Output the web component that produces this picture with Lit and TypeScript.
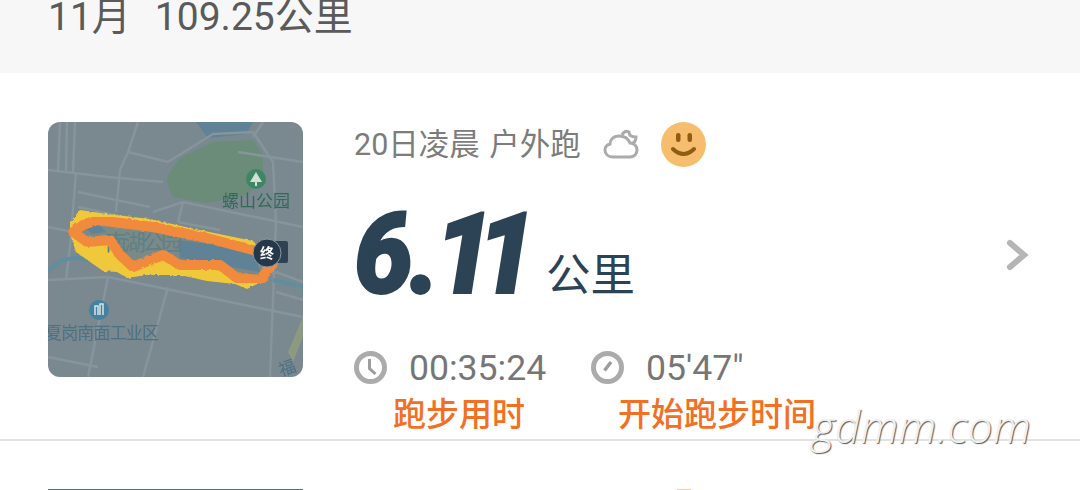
import { LitElement, html, css, svg } from "lit";
import { customElement } from "lit/decorators.js";

const roads = [
  "M0 48 L60 55 L115 60", "M12 0 L10 50", "M19 0 L18 50", "M27 0 L25 50", "M90 0 L80 30 L72 48 L68 90",
  "M80 30 L120 40 L165 12 L205 10 L225 40 L228 100 L222 255", "M30 70 L102 85", "M30 85 L100 100",
  "M105 90 L135 80 L255 105", "M135 80 L130 100", "M130 100 L172 108", "M190 30 L255 40", "M215 0 L205 15",
  "M0 158 L60 155 L255 195", "M60 155 L40 255", "M120 165 L95 255", "M228 150 L255 160", "M0 235 L50 245",
  "M28 50 L22 125 L18 158", "M0 105 L25 110", "M228 170 L255 178"
];
const route = "M205 128 L159 116 L105 105 L49 98 L35 103 L25 110 L39 120 L62 118 L72 133 L85 145 L115 133 L132 143 L149 143 L172 143 L189 156 L212 158 L225 141";

@customElement("run-map")
class RunMap extends LitElement {
  static styles = css`
    :host { display: block; width: 255px; height: 255px; flex: none; border-radius: 12px; overflow: hidden; }
    svg { display: block; }
    text { font-family: "Noto Sans CJK SC", sans-serif; }
    .soft { filter: blur(0.6px); }
    .green { fill: #336a55; font-size: 17px; }
    .blue { fill: #4d7184; font-size: 17px; }
    .lakeName { fill: #5f8084; font-size: 22px; }
    .end { fill: #fff; font-size: 14px; font-weight: 700; }
  `;
  render() {
    return html`<svg width="255" height="255" viewBox="0 0 255 255">
      <defs>
        <filter id="rough" x="-5%" y="-5%" width="110%" height="110%">
          <feTurbulence type="fractalNoise" baseFrequency="0.25" numOctaves="2" seed="3" />
          <feDisplacementMap in="SourceGraphic" scale="3" />
        </filter>
      </defs>
      <g class="soft">
        <rect width="255" height="255" fill="#7a8890" />
        <path d="M148 0 L205 0 L198 12 L160 16 Z" fill="#5f8296" />
        <path d="M120 53 L132 36 L165 20 L205 18 L215 33 L215 56 L199 73 L159 81 L125 75 L119 60 Z" fill="#6b8c78" />
        ${roads.map((d) => svg`<path d=${d} fill="none" stroke="#86949c" stroke-width="2.5" />`)}
        <path d="M0 150 Q10 136 30 136 L60 140" fill="none" stroke="#5f8e9f" stroke-width="4" />
        <path d="M225 158 L255 165" fill="none" stroke="#5f8e9f" stroke-width="4" />
        <path d="M240 230 L255 195 L255 215 L245 240 Z" fill="#8b9a80" />
        <path filter="url(#rough)" d="M22 100 L32 88 L59 92 L102 97 L142 106 L205 119 L226 143 L219 157 L199 167 L187 162 L159 159 L132 153 L99 153 L79 156 L69 150 L55 149 L28 130 L22 112 Z" fill="#f0c93a" />
        <path d="${route} Z" fill="#7a8a88" />
        <path d="M36 105 L49 100 L58 110 L44 112 Z" fill="#5f8296" />
        <path d="M130 118 L205 128 L212 150 L172 143 L132 136 Z" fill="#5f8296" />
        <text x="57" y="128" class="lakeName" textLength="78">南湖公园</text>
        <path filter="url(#rough)" d=${route} fill="none" stroke="#f28a3e" stroke-width="10" stroke-linejoin="round" stroke-linecap="round" />
        <circle cx="208" cy="57" r="10" fill="#3f8566" />
        <path d="M208 50 L214 60 H202 Z M207 60 H209 V64 H207 Z" fill="#cfe0d4" />
        <text x="174" y="85" class="green" textLength="68">螺山公园</text>
        <circle cx="51" cy="188" r="10" fill="#44829f" />
        <path d="M47 193 V184 H50 V193 M52 193 V182 H55 V193" fill="none" stroke="#d5e3ea" stroke-width="1.5" />
        <text x="-3" y="217" class="blue" textLength="114">夏岗南面工业区</text>
        <text x="232" y="252" class="blue" transform="rotate(-20 240 250)">福</text>
        <rect x="218" y="119" width="22" height="22" rx="2" fill="#2f4152" />
      </g>
      <circle cx="219" cy="131" r="14" fill="#24384a" stroke="#8a98a3" stroke-width="1" />
      <text x="219" y="136" class="end" text-anchor="middle">终</text>
    </svg>`;
  }
}

@customElement("app-root")
class AppRoot extends LitElement {
  static styles = css`
    :host { display: block; width: 1080px; height: 490px; overflow: hidden; position: relative; background: #fff;
      font-family: Roboto, "Noto Sans CJK SC", sans-serif; }
    .head { height: 73px; background: #f7f7f7; color: #5a5a5a; font-size: 39px; line-height: 30px;
      display: flex; gap: 24px; padding: 0 0 0 48px; box-sizing: border-box; overflow: hidden; white-space: nowrap; }
    .head span { display: block; margin-top: 2px; }
    .row { display: flex; padding: 49px 50px 62px 48px; gap: 51px; border-bottom: 2px solid #e2e2e2; height: 368px; box-sizing: border-box; }
    .info { flex: 1; display: flex; flex-direction: column; }
    .title { display: flex; align-items: center; height: 45px; color: #7c7c7c; font-size: 30.5px; white-space: nowrap; }
    .title span { margin-bottom: 6px; word-spacing: 2px; }
    .cloud { margin-left: 22px; }
    .smile { margin-left: 22px; }
    .dist { display: flex; align-items: flex-start; margin-top: 26px; height: 130px; color: #2c4255; }
    .num { display: inline-block; width: 192px; font-style: italic; font-weight: 900; font-size: 113px; line-height: 130px;
      white-space: nowrap; transform: scaleX(0.93); transform-origin: left; margin-top: -3px;
      -webkit-text-stroke: 2px #2c4255; }
    .six { letter-spacing: -4px; }
    .dot { letter-spacing: -6px; }
    .one { letter-spacing: -18px; }
    .unit { font-size: 44.5px; line-height: 44px; margin-top: 61px; }
    .stats { display: flex; align-items: center; height: 34px; margin-top: 30px; color: #767676; font-size: 35.6px; }
    .stat { display: flex; align-items: center; gap: 22px; width: 237px; }
    .stat span { margin-top: 2px; }
    .chev { align-self: center; flex: none; margin-top: 10px; margin-left: 3px; }
    .sliver { display: flex; padding: 48px 0 0 48px; position: relative; }
    .sliver i { display: block; width: 255px; height: 2px; background: #5d6f75; }
    .sliver b { display: block; margin-left: 374px; width: 14px; height: 2px; background: #f4d36f; }
    .note { position: absolute; top: 391px; color: #f36f23; font-size: 33px; font-weight: 500; line-height: 42px; white-space: nowrap; font-family: "Noto Sans CJK SC", sans-serif; }
    .a { left: 393px; }
    .b { left: 618px; }
    .mark { position: absolute; left: 812px; top: 396px; font-family: "Open Sans", sans-serif; font-style: italic; font-weight: 300; font-size: 44px; line-height: 60px;
      letter-spacing: 0.5px; color: #f1f1f1; text-shadow: 1px 1px 1px #555; white-space: nowrap; }
  `;
  render() {
    return html`
      <div class="head"><span>11月</span><span>109.25公里</span></div>
      <div class="row">
        <run-map></run-map>
        <div class="info">
          <div class="title">
            <span>20日凌晨 户外跑</span>
            <svg class="cloud" width="36" height="32" viewBox="0 0 36 32" fill="none">
              <path d="M10 28 H27 C32 28 34 24 34 21 C34 17 31 14 27 14 C25 9 21 7 16 7 C10 7 7 11 7 15 C3 16 2 19 2 21 C2 25 5 28 10 28 Z" stroke="#ababab" stroke-width="3" />
              <path d="M19 6 C21 2 24 2 26 3 C26 6 28 8 33 8 C33 11 32 13 30 14" stroke="#ababab" stroke-width="3" />
            </svg>
            <svg class="smile" width="45" height="45" viewBox="0 0 45 45">
              <circle cx="22.5" cy="22.5" r="22.5" fill="#f6bd6f" />
              <rect x="15" y="11" width="4.5" height="9" rx="2.2" fill="#8f5c14" />
              <rect x="26.5" y="11" width="4.5" height="9" rx="2.2" fill="#8f5c14" />
              <path d="M12 27 Q22.5 37 33 27" fill="none" stroke="#8f5c14" stroke-width="4" stroke-linecap="round" />
            </svg>
          </div>
          <div class="dist"><span class="num"><span class="six">6</span><span class="dot">.</span><span class="one">1</span>1</span><span class="unit">公里</span></div>
          <div class="stats">
            <div class="stat">
              <svg width="33" height="33" viewBox="0 0 33 33" fill="none" stroke="#ababab">
                <circle cx="16.5" cy="16.5" r="14" stroke-width="5" />
                <path d="M15.5 8 V17.5 L21.5 23" stroke-width="3" stroke="#9c9c9c" />
              </svg>
              <span>00:35:24</span>
            </div>
            <div class="stat">
              <svg width="33" height="33" viewBox="0 0 33 33" fill="none" stroke="#ababab">
                <circle cx="16.5" cy="16.5" r="14" stroke-width="5" />
                <path d="M13.5 19.5 L20 11" stroke-width="3.5" stroke="#9c9c9c" />
              </svg>
              <span>05'47"</span>
            </div>
          </div>
        </div>
        <svg class="chev" width="24" height="32" viewBox="0 0 24 32" fill="none">
          <path d="M4 4 L18 16 L4 28" stroke="#b5b5b5" stroke-width="6" stroke-linecap="round" />
        </svg>
      </div>
      <div class="sliver"><i></i><b></b></div>
      <div class="note a">跑步用时</div>
      <div class="note b">开始跑步时间</div>
      <div class="mark">gdmm.com</div>
    `;
  }
}
